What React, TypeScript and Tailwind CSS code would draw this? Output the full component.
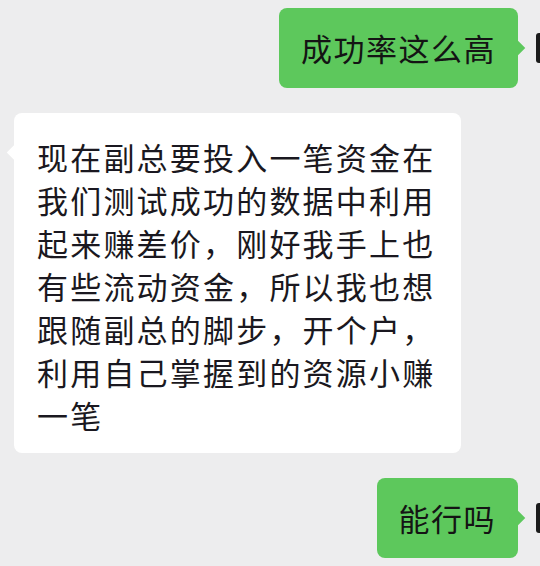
import React from 'react';

const font = { fontFamily: '"Noto Sans CJK SC", "Noto Sans", sans-serif' };

// outgoing message: green bubble followed by the avatar, which runs off the right edge
function SentBubble({ text }: { text: string }) {
  return (
    <div className="mr-[-36px] flex items-center justify-end">
      <div className="relative rounded-[8px] bg-[#5dc85c] px-[22px] py-[18px] text-[31px] leading-[44px] tracking-[1.5px] text-[#141414]">
        {text}
        <span className="absolute right-[-5px] top-1/2 h-[11px] w-[11px] -translate-y-1/2 rotate-45 bg-[#5dc85c]" />
      </div>
      <div className="ml-[18px] h-[30px] w-[40px] shrink-0 rounded-[3px] bg-[#1b1b1b]" />
    </div>
  );
}

function ReceivedBubble({ lines }: { lines: string[] }) {
  return (
    <div className="flex pl-[14px]">
      <div className="relative w-[447px] rounded-[8px] bg-white pl-[23px] pr-[20px] pt-[22px] pb-[17px] text-[31px] leading-[43px] tracking-[2.2px] text-[#1a1820]">
        {lines.map((l) => (
          <div key={l} className="whitespace-nowrap">
            {l}
          </div>
        ))}
        <span className="absolute left-[-5px] top-[34px] h-[11px] w-[11px] rotate-45 bg-white" />
      </div>
    </div>
  );
}

export default function App() {
  return (
    <div style={font} className="flex h-[566px] w-[540px] flex-col gap-[25px] overflow-hidden bg-[#ededee] pt-[8px]">
      <SentBubble text="成功率这么高" />
      <ReceivedBubble
        lines={[
          '现在副总要投入一笔资金在',
          '我们测试成功的数据中利用',
          '起来赚差价，刚好我手上也',
          '有些流动资金，所以我也想',
          '跟随副总的脚步，开个户，',
          '利用自己掌握到的资源小赚',
          '一笔',
        ]}
      />
      <SentBubble text="能行吗" />
    </div>
  );
}
